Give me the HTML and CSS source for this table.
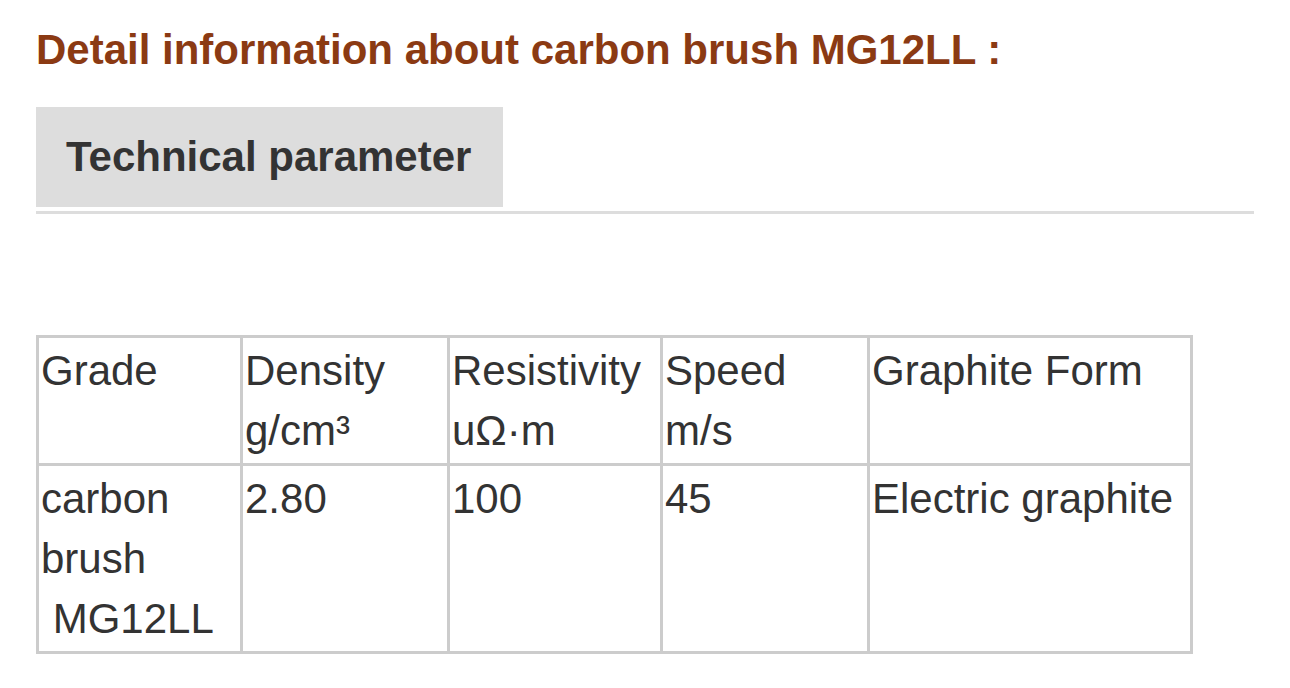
FILE: index.html
```html
<!DOCTYPE html>
<html lang="en">
<head>
<meta charset="utf-8">
<title>Carbon brush MG12LL</title>
<link rel="stylesheet" href="styles.css">
</head>
<body>
<div class="page">
  <h1 class="title">Detail information about carbon brush MG12LL :</h1>
  <div class="tabs">
    <div class="tab">Technical parameter</div>
  </div>
  <table class="params">
    <colgroup>
      <col class="c1"><col class="c2"><col class="c3"><col class="c4"><col class="c5">
    </colgroup>
    <tr>
      <td>Grade</td>
      <td>Density g/cm³</td>
      <td>Resistivity uΩ·m</td>
      <td>Speed m/s</td>
      <td>Graphite Form</td>
    </tr>
    <tr>
      <td>carbon brush &nbsp;MG12LL</td>
      <td>2.80</td>
      <td>100</td>
      <td>45</td>
      <td>Electric graphite</td>
    </tr>
  </table>
</div>
</body>
</html>
```
FILE: styles.css
```css
html, body {
  margin: 0;
  padding: 0;
  background: #ffffff;
}

.page {
  padding: 26px 36px 0 36px;
  font-family: "Liberation Sans", Arial, Helvetica, sans-serif;
  color: #333333;
}

.title {
  margin: 0 0 33px 0;
  font-size: 42px;
  font-weight: bold;
  line-height: 48px;
  color: #8b3a13;
}

.tabs {
  display: flex;
  border-bottom: 3px solid #dddddd;
}

.tab {
  background: #dddddd;
  padding: 0 32px 0 30px;
  height: 100px;
  line-height: 100px;
  font-size: 42px;
  font-weight: bold;
  color: #333333;
  margin-bottom: 4px;
}

.params {
  margin-top: 121px;
  width: 1157px;
  table-layout: fixed;
  border-collapse: collapse;
  font-size: 42px;
  line-height: 60px;
}

.params td {
  border: 3px solid #cccccc;
  padding: 3px 4px 2px 2px;
  vertical-align: top;
  text-align: left;
}

.c1 { width: 204px; }
.c2 { width: 207px; }
.c3 { width: 213px; }
.c4 { width: 207px; }
.c5 { width: 323px; }
```
